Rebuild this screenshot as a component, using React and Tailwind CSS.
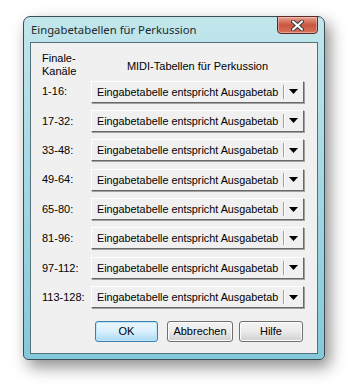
import { useState } from "react";

const ranges = ["1-16:", "17-32:", "33-48:", "49-64:", "65-80:", "81-96:", "97-112:", "113-128:"];

function Dropdown({ value }) {
  return (
    <div className="flex h-[22px] w-[213px] items-stretch border border-t-white border-l-white border-r-[#696969] border-b-[#696969] bg-[#f0f0f0] shadow-[1px_1px_0_#a0a0a0]">
      <div className="flex-1 overflow-hidden whitespace-nowrap pl-[5px] pt-[3px] text-[10.8px] leading-[14px]">{value}</div>
      <div className="my-[3px] w-px bg-[#a0a0a0] shadow-[1px_0_0_#fff]" />
      <div className="flex w-[19px] items-center justify-center">
        <svg width="9" height="5" viewBox="0 0 9 5">
          <polygon points="0,0 9,0 4.5,5" fill="#000" />
        </svg>
      </div>
    </div>
  );
}

function Button({ label, primary, className }) {
  return (
    <button
      className={
        (primary
          ? "h-[21px] rounded-[3px] border border-[#3c7fb1] bg-gradient-to-b from-[#eaf6fd] via-[#d9f0fc] to-[#a7d9f5] shadow-[inset_0_0_0_1px_#bfe4f9] text-[#000] "
          : "h-[21px] rounded-[3px] border border-[#707070] bg-gradient-to-b from-[#f2f2f2] via-[#ebebeb] to-[#cfcfcf] shadow-[inset_0_0_0_1px_#fcfcfc] text-[#000] ") + className
      }
    >
      {label}
    </button>
  );
}

export default function App() {
  const [tables] = useState(ranges.map(() => "Eingabetabelle entspricht Ausgabetab"));

  return (
    <div className="h-[385px] w-[347px] bg-white pl-[23px] pt-[16px]" style={{ fontFamily: "'Liberation Sans', Arial, sans-serif" }}>
      <div className="relative flex h-[344px] w-[302px] flex-col rounded-t-[7px] rounded-b-[5px] border border-[#3a4d55] bg-gradient-to-b from-[#c2e6ec] via-[#a2d8e3] to-[#84c9d9] px-[6px] pb-[5px] shadow-[5px_7px_16px_rgba(0,0,0,0.45)]">
        <div className="flex h-[25px] items-center pl-[1px] pt-[2px] text-[11.3px] text-[#1e2a30]" style={{ fontFamily: "'Noto Sans', 'Open Sans', sans-serif" }}>
          Eingabetabellen für Perkussion
        </div>
        <div className="absolute right-[6px] top-[-1px] flex h-[18px] w-[41px] items-center justify-center rounded-b-[4px] border border-[#5c2b25] bg-gradient-to-b from-[#e8a08f] via-[#c9553f] to-[#d8735c] shadow-[inset_0_0_0_1px_rgba(255,255,255,0.35)]">
          <svg width="13" height="11" viewBox="0 0 13 11">
            <path d="M2 1.5 L11 9.5 M11 1.5 L2 9.5" stroke="#3c3c3c" strokeWidth="4" strokeLinecap="round" />
            <path d="M2 1.5 L11 9.5 M11 1.5 L2 9.5" stroke="#fff" strokeWidth="2" strokeLinecap="round" />
          </svg>
        </div>
        <div className="flex flex-1 flex-col border border-[#52707a] bg-[#f0f0f0] pl-[11px] text-[11px] text-black">
          <div className="flex pt-[8.5px]">
            <div className="w-[49px] leading-[13px]">
              Finale-
              <br />
              Kanäle
            </div>
            <div className="w-[213px] pt-[8px] text-center leading-[13px]">MIDI-Tabellen für Perkussion</div>
          </div>
          <div className="mt-[3px] flex flex-col gap-[7.4px]">
            {ranges.map((r, i) => (
              <div key={r} className="flex items-center">
                <div className="w-[49px] whitespace-nowrap">{r}</div>
                <Dropdown value={tables[i]} />
              </div>
            ))}
          </div>
          <div className="mt-[13px] flex pl-[53px]">
            <Button label="OK" primary className="w-[63px]" />
            <Button label="Abbrechen" className="ml-[9px] w-[66px]" />
            <Button label="Hilfe" className="ml-[6px] w-[64px]" />
          </div>
        </div>
      </div>
    </div>
  );
}
